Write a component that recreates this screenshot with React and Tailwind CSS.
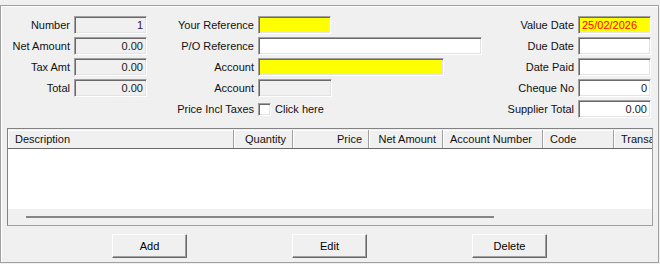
const sunken =
  'border border-t-[#a0a0a0] border-l-[#a0a0a0] border-r-white border-b-white shadow-[inset_1px_1px_0_#696969,inset_-1px_-1px_0_#e3e3e3]'

function Field({ label, labelW, boxW, value = '', bg = 'bg-white', align = 'text-right', color = 'text-[#1a1a1a]' }) {
  return (
    <div className="flex h-[18px] items-center">
      <span className="shrink-0 whitespace-nowrap text-right text-[#111]" style={{ width: labelW }}>{label}</span>
      <div
        className={`ml-[4px] flex h-[18px] items-center px-[3px] leading-none ${sunken} ${bg} ${align} ${color}`}
        style={{ width: boxW }}
      >
        <span className="w-full">{value}</span>
      </div>
    </div>
  )
}

function HeadCell({ w, children, right }) {
  return (
    <div
      className={`flex h-[18px] shrink-0 items-center overflow-hidden whitespace-nowrap border-r border-r-[#a0a0a0] bg-[#f0f0f0] shadow-[inset_1px_1px_0_#fff] ${right ? 'justify-end pr-[6px]' : 'pl-[7px]'}`}
      style={{ width: w }}
    >
      {children}
    </div>
  )
}

function Btn({ children }) {
  return (
    <button className="h-[24px] w-[75px] border border-t-white border-l-white border-r-[#696969] border-b-[#696969] bg-[#f0f0f0] text-[11px] text-black shadow-[inset_-1px_-1px_0_#a0a0a0]">
      {children}
    </button>
  )
}

export default function App() {
  return (
    <div className="h-[264px] w-[660px] overflow-hidden bg-[#f0f0f0] pt-[5px] font-['Liberation_Sans',Arial,sans-serif] text-[11px] text-[#111]">
      <div className="h-[258px] w-[659px] border border-[#a0a0a0] shadow-[inset_1px_1px_0_#fff]">
        {/* top form */}
        <div className="flex pt-[10px]">
          <div className="flex flex-col gap-[3px]">
            <Field label="Number" labelW={69} boxW={73} value="1" bg="bg-[#f0f0f0]" color="text-[#3a1040]" />
            <Field label="Net Amount" labelW={69} boxW={73} value="0.00" bg="bg-[#f0f0f0]" />
            <Field label="Tax Amt" labelW={69} boxW={73} value="0.00" bg="bg-[#f0f0f0]" />
            <Field label="Total" labelW={69} boxW={73} value="0.00" bg="bg-[#f0f0f0]" />
          </div>
          <div className="flex flex-col gap-[3px]">
            <Field label="Your Reference" labelW={107} boxW={73} bg="bg-[#ffff00]" />
            <Field label="P/O Reference" labelW={107} boxW={224} />
            <Field label="Account" labelW={107} boxW={186} bg="bg-[#ffff00]" />
            <Field label="Account" labelW={107} boxW={74} bg="bg-[#f0f0f0]" />
            <div className="flex h-[18px] items-center">
              <span className="w-[107px] shrink-0 whitespace-nowrap text-right">Price Incl Taxes</span>
              <span className={`ml-[4px] h-[13px] w-[13px] bg-white ${sunken}`} />
              <span className="ml-[4px]">Click here</span>
            </div>
          </div>
          <div className="ml-auto flex flex-col gap-[3px] pr-[7px]">
            <Field label="Value Date" labelW={90} boxW={73} value="25/02/2026" bg="bg-[#ffff00]" align="text-left" color="text-[#ff0000]" />
            <Field label="Due Date" labelW={90} boxW={73} />
            <Field label="Date Paid" labelW={90} boxW={73} />
            <Field label="Cheque No" labelW={90} boxW={73} value="0" />
            <Field label="Supplier Total" labelW={90} boxW={73} value="0.00" />
          </div>
        </div>

        {/* grid */}
        <div className="ml-[6px] mt-[10px] flex h-[98px] w-[646px] flex-col overflow-hidden border border-t-[#828282] border-l-[#828282] border-r-[#a0a0a0] border-b-[#a0a0a0] pt-[1px]">
          <div className="flex border-b border-b-[#696969]">
            <HeadCell w={226}>Description</HeadCell>
            <HeadCell w={59} right>Quantity</HeadCell>
            <HeadCell w={76} right>Price</HeadCell>
            <HeadCell w={74} right>Net Amount</HeadCell>
            <HeadCell w={100}>Account Number</HeadCell>
            <HeadCell w={71}>Code</HeadCell>
            <HeadCell w={100}>Transaction</HeadCell>
          </div>
          <div className="h-[60px] bg-white" />
          <div className="flex flex-1 items-center bg-[#f0f0f0]">
            <div className="ml-[18px] h-[2px] w-[468px] bg-[#858585]" />
          </div>
        </div>

        {/* buttons */}
        <div className="mt-[8px] flex gap-[105px] pl-[111px]">
          <Btn>Add</Btn>
          <Btn>Edit</Btn>
          <Btn>Delete</Btn>
        </div>
      </div>
    </div>
  )
}
